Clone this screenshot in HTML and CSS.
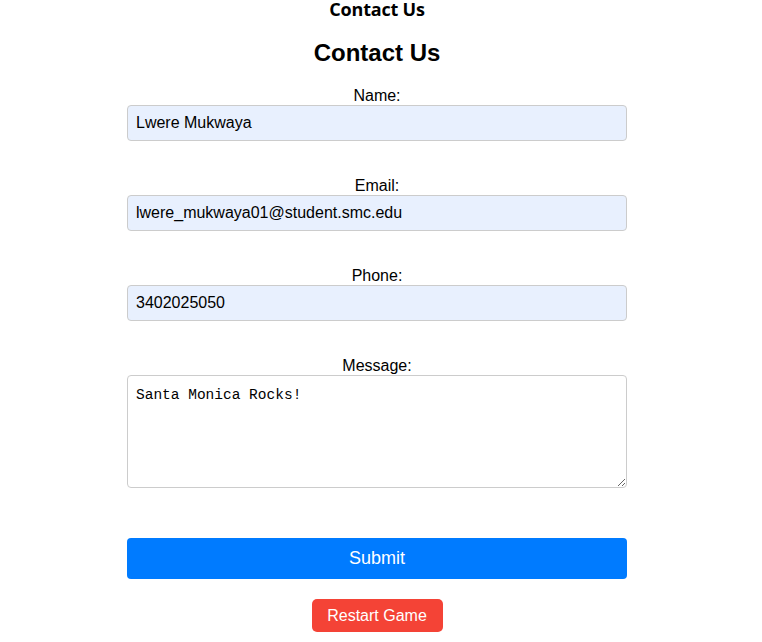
FILE: index.html
```html
<!DOCTYPE html>
<html>
<head>
<meta charset="utf-8">
<link rel="stylesheet" href="styles.css">
</head>
<body>
<div class="page">
  <h1 class="title">Contact Us</h1>
  <h2 class="heading">Contact Us</h2>
  <form class="form">
    <div class="field">
      <label class="label" for="name">Name:</label>
      <input class="input" id="name" type="text" value="Lwere Mukwaya">
    </div>
    <div class="field">
      <label class="label" for="email">Email:</label>
      <input class="input" id="email" type="text" value="lwere_mukwaya01@student.smc.edu">
    </div>
    <div class="field">
      <label class="label" for="phone">Phone:</label>
      <input class="input" id="phone" type="text" value="3402025050">
    </div>
    <div class="field">
      <label class="label" for="msg">Message:</label>
      <textarea class="textarea" id="msg">Santa Monica Rocks!</textarea>
    </div>
    <button class="submit" type="button">Submit</button>
  </form>
  <button class="restart" type="button">Restart Game</button>
</div>
</body>
</html>
```
FILE: styles.css
```css
html, body {
  margin: 0;
  padding: 0;
  background: #fff;
}
body {
  font-family: "Liberation Sans", Arial, sans-serif;
  color: #000;
}
.page {
  width: 754px;
  display: flex;
  flex-direction: column;
  align-items: center;
}
.title {
  font-family: "Open Sans", "Noto Sans", sans-serif;
  font-size: 18px;
  font-weight: 700;
  line-height: 16px;
  margin: 0;
  padding-top: 1px;
  letter-spacing: -0.2px;
}
.heading {
  font-size: 24px;
  font-weight: 700;
  line-height: 28px;
  margin: 22px 0 0 0;
}
.form {
  width: 500px;
  display: flex;
  flex-direction: column;
  margin-top: 20px;
}
.field {
  display: flex;
  flex-direction: column;
  align-items: center;
  margin-bottom: 36px;
}
.label {
  font-size: 16px;
  line-height: 18px;
}
.input {
  box-sizing: border-box;
  width: 500px;
  height: 36px;
  padding: 0 8px;
  border: 1px solid #ccc;
  border-radius: 4px;
  background: #e8f0fe;
  font-family: "Liberation Sans", Arial, sans-serif;
  font-size: 16px;
  color: #000;
  outline: none;
}
.textarea {
  box-sizing: border-box;
  width: 500px;
  height: 113px;
  padding: 10px 8px 8px 8px;
  border: 1px solid #ccc;
  border-radius: 4px;
  background: #fff;
  font-family: "Liberation Mono", "DejaVu Sans Mono", monospace;
  font-size: 14.5px;
  line-height: 18px;
  color: #000;
  outline: none;
  resize: vertical;
}
.submit {
  margin-top: 14px;
  width: 500px;
  height: 41px;
  border: none;
  border-radius: 4px;
  background: #007bff;
  color: #fff;
  font-family: "Liberation Sans", Arial, sans-serif;
  font-size: 18px;
  cursor: pointer;
}
.restart {
  margin-top: 20px;
  width: 131px;
  height: 33px;
  border: none;
  border-radius: 5px;
  background: #f44336;
  color: #fff;
  font-family: "Liberation Sans", Arial, sans-serif;
  font-size: 16px;
  cursor: pointer;
}
```
